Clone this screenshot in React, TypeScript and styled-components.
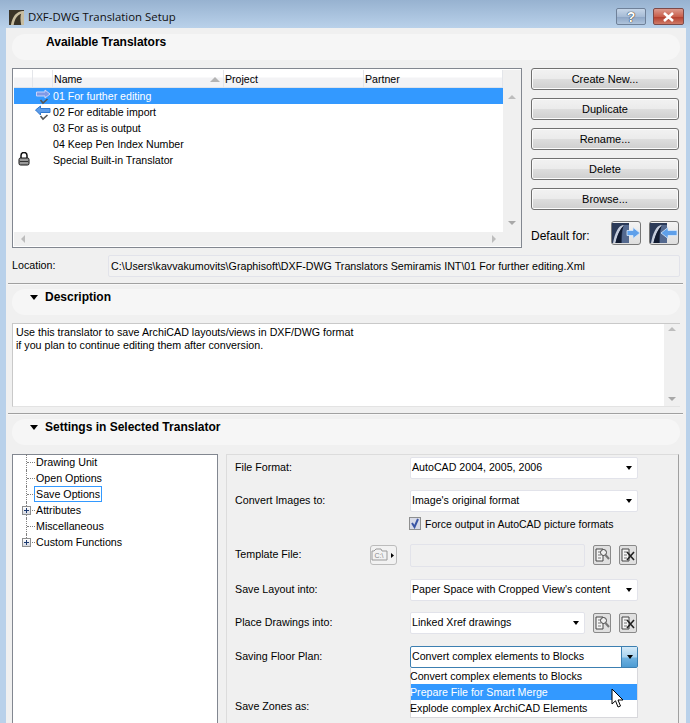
import React from "react";
import styled, { createGlobalStyle } from "styled-components";

const GlobalStyle = createGlobalStyle`
  html, body { margin: 0; padding: 0; background: #b9d1ea; }
  body { font-family: "Liberation Sans", "Noto Sans", sans-serif; font-size: 10.7px; color: #000; }
`;

const Frame = styled.div`
  width: 690px;
  height: 723px;
  overflow: hidden;
  background: linear-gradient(#97b2d0 0, #b9d1ea 28px);
  display: flex;
  flex-direction: column;
`;

const TitleBar = styled.div`
  height: 28px;
  flex: none;
  box-sizing: border-box;
  display: flex;
  align-items: center;
  padding: 6px 6px 0 9px;
  gap: 4px;
  font-family: "Open Sans", sans-serif;
  font-size: 11.4px;
  color: #111;
`;

const TitleText = styled.span`
  flex: 1;
  margin-top: -2px;
`;

const CaptionButton = styled.div<{ $close?: boolean; $w: number }>`
  width: ${(p) => p.$w}px;
  height: 17px;
  box-sizing: border-box;
  margin-left: ${(p) => (p.$close ? 3 : 0)}px;
  margin-top: -1px;
  border: 1px solid ${(p) => (p.$close ? "#7d4a48" : "#6f8199")};
  border-radius: 2px;
  display: flex;
  align-items: center;
  justify-content: center;
  background: ${(p) =>
    p.$close
      ? "linear-gradient(#dc9a8d, #c9604d 50%, #b5402f 55%, #cf7b68)"
      : "linear-gradient(#c6d6e8, #a7bcd6 50%, #8fa7c6 55%, #afc4dc)"};
  color: #fff;
  font-weight: 700;
  font-size: 14px;
  font-family: "Liberation Sans", sans-serif;
  text-shadow: 0 0 1px #222, 0 0 1px #222;
`;

const Content = styled.div`
  margin: 0 4px 0 6px;
  flex: 1;
  background: #f0f0f0;
  display: flex;
  flex-direction: column;
  padding: 6px 0 0 6px;
  min-height: 0;
`;

const SectionHead = styled.div`
  width: 668px;
  height: 26px;
  flex: none;
  box-sizing: border-box;
  border-radius: 13px;
  background: #f6f6f6;
  padding-left: 18px;
  display: flex;
  align-items: flex-start;
  font-weight: 700;
  font-size: 12px;
  line-height: 17px;
`;

const Triangle = styled.span`
  width: 0;
  height: 0;
  margin-top: 6px;
  margin-right: 7px;
  border-left: 4.5px solid transparent;
  border-right: 4.5px solid transparent;
  border-top: 5px solid #000;
`;

const HeadSpacer = styled.span`
  width: 16px;
`;

const TopRow = styled.div`
  display: flex;
  gap: 9px;
  margin-top: 8px;
  height: 180px;
  flex: none;
`;

const ListBox = styled.div`
  width: 510px;
  box-sizing: border-box;
  border: 1px solid #828790;
  background: #fff;
  display: grid;
  grid-template-columns: 489px 1fr;
  padding: 1px 0 1px 1px;
  font-size: 10.6px;
`;

const ListMain = styled.div`
  display: flex;
  flex-direction: column;
`;

const ListHeader = styled.div`
  height: 18px;
  flex: none;
  box-sizing: border-box;
  display: grid;
  grid-template-columns: 19px 20px 171px 140px 1fr;
  background: linear-gradient(#fff 0, #fff 7px, #f3f3f5 8px, #f3f3f5 16px);
  border-bottom: 1px solid #dfe3ea;
`;

const HeadCell = styled.div`
  position: relative;
  padding-left: 1px;
  border-right: 1px solid #e4e6ea;
  line-height: 18px;
  overflow: hidden;
`;

const SortArrow = styled.span`
  position: absolute;
  right: 3px;
  top: 7px;
  width: 0;
  height: 0;
  border-left: 5px solid transparent;
  border-right: 5px solid transparent;
  border-bottom: 5px solid #b4b4b4;
`;

const ListRows = styled.div`
  flex: 1;
`;

const ListRow = styled.div<{ $selected?: boolean }>`
  height: 16px;
  display: grid;
  grid-template-columns: 19px 20px 1fr;
  align-items: center;
  line-height: 16px;
  background: ${(p) => (p.$selected ? "#3399ff" : "transparent")};
  color: ${(p) => (p.$selected ? "#fff" : "#000")};
`;

const IconCell = styled.div`
  display: flex;
  justify-content: center;
  height: 16px;
`;

const VScroll = styled.div`
  background: #f0f0f0;
  display: flex;
  flex-direction: column;
  justify-content: space-between;
  align-items: center;
  padding: 25px 0 21px;
`;

const HScroll = styled.div`
  height: 14px;
  flex: none;
  background: #f0f0f0;
  display: flex;
  justify-content: space-between;
  align-items: center;
  padding: 0 7px;
`;

const Arrow = styled.span<{ $dir: "up" | "down" | "left" | "right" }>`
  width: 0;
  height: 0;
  ${(p) =>
    p.$dir === "up"
      ? "border-left:4px solid transparent;border-right:4px solid transparent;border-bottom:4px solid #bdbdbd;"
      : p.$dir === "down"
        ? "border-left:4px solid transparent;border-right:4px solid transparent;border-top:4px solid #a8a8a8;"
        : p.$dir === "left"
          ? "border-top:4px solid transparent;border-bottom:4px solid transparent;border-right:4px solid #bdbdbd;"
          : "border-top:4px solid transparent;border-bottom:4px solid transparent;border-left:4px solid #bdbdbd;"}
`;

const ButtonColumn = styled.div`
  width: 148px;
  display: flex;
  flex-direction: column;
  gap: 8px;
  font-size: 11px;
`;

const PushButton = styled.div`
  height: 22px;
  box-sizing: border-box;
  border: 1px solid #707070;
  border-radius: 3px;
  background: linear-gradient(#f2f2f2, #ebebeb 48%, #dddddd 52%, #cfcfcf);
  box-shadow: inset 0 0 0 1px #fbfbfb;
  display: flex;
  align-items: center;
  justify-content: center;
  padding-bottom: 1px;
`;

const DefaultRow = styled.div`
  display: flex;
  align-items: center;
  margin-top: 3px;
  height: 24px;
  gap: 8px;
`;

const DefaultLabel = styled.span`
  flex: 1;
  padding-top: 6px;
  font-size: 12px;
`;

const ImageButton = styled.div`
  width: 30px;
  height: 24px;
  box-sizing: border-box;
  border: 1px solid #777;
  border-radius: 3px;
  background: linear-gradient(#f4f4f4, #dedede);
  display: flex;
  align-items: center;
  justify-content: center;
`;

const LocationRow = styled.div`
  display: flex;
  align-items: center;
  margin-top: 7px;
  height: 22px;
  flex: none;
`;

const LocationLabel = styled.span`
  width: 96px;
  margin-top: -3px;
`;

const LocationField = styled.div`
  width: 572px;
  height: 22px;
  box-sizing: border-box;
  border: 1px solid #e2e3ea;
  border-radius: 2px;
  background: #f2f2f2;
  padding-left: 2px;
  font-size: 10.7px;
  line-height: 20px;
  white-space: nowrap;
  overflow: hidden;
`;

const Divider = styled.div<{ $top: number }>`
  height: 1px;
  flex: none;
  width: 675px;
  margin: ${(p) => p.$top}px 0 5px -4px;
  background: #a0a0a0;
  box-shadow: 0 1px 0 #f8f8f8;
`;

const DescBox = styled.div`
  margin-top: 8px;
  width: 668px;
  height: 84px;
  flex: none;
  box-sizing: border-box;
  border: 1px solid #c9c9c9;
  border-bottom-color: #e3e3e3;
  border-right: none;
  background: #fff;
  display: grid;
  grid-template-columns: 1fr 16px;
`;

const DescText = styled.div`
  padding: 2px 3px;
  line-height: 13px;
  white-space: pre-line;
`;

const DescScroll = styled(VScroll)`
  padding: 3px 0 5px;
`;

const SettingsRow = styled.div`
  display: flex;
  gap: 8px;
  margin-top: 9px;
  flex: 1;
  min-height: 0;
`;

const Tree = styled.div`
  width: 206px;
  box-sizing: border-box;
  border: 1px solid #828790;
  border-bottom: none;
  background: #fff;
`;

const TreeRow = styled.div<{ $last?: boolean }>`
  position: relative;
  top: -1px;
  height: 16px;
  line-height: 16px;
  padding-left: 22px;
  &::before {
    content: "";
    position: absolute;
    left: 13px;
    top: 0;
    height: ${(p) => (p.$last ? 8 : 16)}px;
    border-left: 1px dotted #808080;
  }
  &::after {
    content: "";
    position: absolute;
    left: 14px;
    top: 8px;
    width: 8px;
    border-top: 1px dotted #808080;
  }
`;

const TreeLabel = styled.span<{ $focused?: boolean }>`
  display: inline-block;
  line-height: 14px;
  padding: 0 1px;
  margin-left: -1px;
  border: 1px solid ${(p) => (p.$focused ? "#3399ff" : "transparent")};
`;

const Expander = styled.span`
  position: absolute;
  z-index: 1;
  left: 9px;
  top: 4px;
  width: 9px;
  height: 9px;
  box-sizing: border-box;
  border: 1px solid #8e8f8f;
  background: linear-gradient(#fff, #d5d8e0);
  &::before {
    content: "";
    position: absolute;
    left: 1px;
    top: 3px;
    width: 5px;
    height: 1px;
    background: #1c3a70;
  }
  &::after {
    content: "";
    position: absolute;
    left: 3px;
    top: 1px;
    width: 1px;
    height: 5px;
    background: #1c3a70;
  }
`;

const FormPanel = styled.div`
  width: 453px;
  box-sizing: border-box;
  border: 1px solid #dcdcdc;
  border-right: 1px solid #a0a0a0;
  border-bottom: none;
  padding: 2px 0 0 8px;
  display: flex;
  flex-direction: column;
`;

const FormRow = styled.div<{ $top?: number }>`
  display: flex;
  align-items: center;
  height: 22px;
  margin-top: ${(p) => p.$top ?? 0}px;
  flex: none;
`;

const FormLabel = styled.span`
  width: 135px;
  flex: none;
  margin-top: -2px;
`;

const Slot = styled.div`
  width: 40px;
  flex: none;
  display: flex;
`;

const SelectBox = styled.div<{ $w: number; $open?: boolean }>`
  position: relative;
  width: ${(p) => p.$w}px;
  height: 22px;
  box-sizing: border-box;
  background: #fff;
  border: 1px solid ${(p) => (p.$open ? "#3c7fb1" : "#e2e3ea")};
  border-radius: 2px;
  padding-left: 1px;
  display: flex;
  align-items: center;
  justify-content: space-between;
  font-size: 10.65px;
  line-height: 18px;
  white-space: nowrap;
`;

const SelectValue = styled.span`
  margin-top: -2px;
`;

const Caret = styled.span`
  width: 0;
  height: 0;
  margin-right: 5px;
  border-left: 3.5px solid transparent;
  border-right: 3.5px solid transparent;
  border-top: 4px solid #000;
`;

const CaretButton = styled.span`
  width: 16px;
  height: 20px;
  box-sizing: border-box;
  border-left: 1px solid #3c7fb1;
  background: linear-gradient(#d5eaf8, #a9d3ef 50%, #6fb2e0 55%, #4d9bd3);
  display: flex;
  align-items: center;
  justify-content: center;
  & > span { margin: 0; }
`;

const Dropdown = styled.div`
  position: absolute;
  left: -1px;
  top: 21px;
  width: 228px;
  box-sizing: border-box;
  background: #fff;
  border: 1px solid #d8d8dc;
  border-top: none;
  padding-bottom: 1px;
`;

const DropItem = styled.div<{ $active?: boolean }>`
  height: 16px;
  line-height: 16px;
  text-indent: -1px;
  background: ${(p) => (p.$active ? "#3399ff" : "transparent")};
  color: ${(p) => (p.$active ? "#fff" : "#000")};
`;

const Cursor = styled.svg`
  position: absolute;
  left: 200px;
  top: 41px;
`;

const CheckRow = styled.div`
  display: flex;
  align-items: center;
  height: 13px;
  margin-top: 5px;
  margin-left: 174px;
  gap: 4px;
  font-size: 10.5px;
`;

const CheckBox = styled.span`
  width: 12px;
  height: 13px;
  box-sizing: border-box;
  border: 1px solid #8e8f8f;
  background: #d8dbe8;
  display: flex;
`;

const ReadOnlyField = styled.div`
  width: 175px;
  height: 23px;
  flex: none;
  box-sizing: border-box;
  border: 1px solid #e2e3ea;
  border-radius: 2px;
  background: #f0f0f0;
`;

const ToolButton = styled.div<{ $gap: number }>`
  width: 18px;
  height: 20px;
  margin-left: ${(p) => p.$gap}px;
  box-sizing: border-box;
  border: 1px solid #8a8a8a;
  border-radius: 2px;
  background: #e0e0e0;
  display: flex;
  align-items: center;
  justify-content: center;
`;

const FolderButton = styled.div`
  width: 27px;
  height: 20px;
  box-sizing: border-box;
  border: 1px solid #bcbcbc;
  border-radius: 3px;
  background: #f2f2f2;
  display: flex;
  align-items: center;
  justify-content: center;
`;

const ArrowIcon = ({ back }: { back?: boolean }) => (
  <svg width="16" height="16" viewBox="0 0 16 16" style={{ overflow: "visible" }}>
    <path
      d={back ? "M0.5 6 L5.5 2 V4.5 H15 V8.5 H5.5 V11 Z" : "M1.5 4 H10 V2 L15 6 L10 10 V8 H1.5 Z"}
      fill={back ? "#5b9be8" : "#8099e6"}
      stroke={back ? "#2f78d0" : "#c9d4f8"}
      strokeWidth="1"
    />
    <path d="M5.5 12 L8 15 L12.5 11" fill="none" stroke="#555" strokeWidth="1.6" />
  </svg>
);

const LockIcon = () => (
  <svg width="12" height="14" viewBox="0 0 12 14">
    <path d="M3 6 V3.5 a3 3 0 0 1 6 0 V6" fill="none" stroke="#111" strokeWidth="1.5" />
    <rect x="1" y="6" width="10" height="7" rx="1.5" fill="#999" stroke="#111" />
    <rect x="2" y="9" width="8" height="1" fill="#333" />
  </svg>
);

const ArcMark = () => (
  <svg width="15" height="15" viewBox="0 0 16 16" style={{ flex: "none" }}>
    <rect width="16" height="16" fill="#3a3428" />
    <path d="M2 16 C4 6 8 2 14 1 L16 1 L16 16 L13 16 C12 10 12 6 13 4 C8 6 6 10 5 16 Z" fill="#c8bda0" />
  </svg>
);

const DefaultIcon = ({ back }: { back?: boolean }) => (
  <svg width="28" height="20" viewBox="0 0 28 20">
    <rect width="17" height="20" fill="#2b3a58" />
    <path d="M1 20 C3 10 6 3 11 2 L12 2.6 C8 6 5.5 12 3.5 20 Z" fill="#c4ccdc" />
    <path d="M12 2.6 C8 6 5.5 12 3.5 20 H9 C9 12 10 7 12 2.6 Z" fill="#101a30" />
    <path d="M12 2 h5 V20 h-7 C10 12 10 7 12 2 Z" fill="#54698f" />
    <path
      d={back ? "M11 10 L18 4.5 V7.5 H27 V12.5 H18 V15.5 Z" : "M15 7.5 H21 V4.5 L28 10 L21 15.5 V12.5 H15 Z"}
      fill="#5fa0ea"
      stroke="#d8e8fa"
      strokeWidth="0.8"
    />
  </svg>
);

const SearchDocIcon = () => (
  <svg width="16" height="16" viewBox="0 0 16 16">
    <path d="M2 2 H9 V14 H2 Z" fill="#f4f4f4" stroke="#444" />
    <path d="M4 5 H7 M4 8 H7 M4 11 H7" stroke="#777" />
    <circle cx="9.5" cy="5.5" r="3" fill="#eee" stroke="#444" />
    <path d="M11.5 8 L15 12" stroke="#777" strokeWidth="2" />
  </svg>
);

const ClearDocIcon = () => (
  <svg width="16" height="16" viewBox="0 0 16 16">
    <path d="M2 2 H9 V14 H2 Z" fill="#f4f4f4" stroke="#444" />
    <path d="M4 5 H7 M4 8 H7 M4 11 H7" stroke="#777" />
    <path d="M7 5 L14 13 M14 5 L7 13" stroke="#222" strokeWidth="1.6" />
  </svg>
);

const FolderIcon = () => (
  <svg width="25" height="16" viewBox="0 0 25 16">
    <path d="M1 4 H3 L5 2 H10 L11 4 H16 V13 H1 Z" fill="none" stroke="#999" />
    <text x="3.5" y="11" fontSize="7" fill="#888" fontFamily="Liberation Sans, sans-serif">C:\</text>
    <path d="M20 6 L23 8.5 L20 11 Z" fill="#000" />
  </svg>
);

const translators = [
  { name: "01 For further editing", icon: <ArrowIcon />, selected: true },
  { name: "02 For editable import", icon: <ArrowIcon back /> },
  { name: "03 For as is output" },
  { name: "04 Keep Pen Index Number" },
  { name: "Special Built-in Translator", lock: true },
];

const actions = ["Create New...", "Duplicate", "Rename...", "Delete", "Browse..."];

const treeItems = [
  { label: "Drawing Unit" },
  { label: "Open Options" },
  { label: "Save Options", focused: true },
  { label: "Attributes", expand: true },
  { label: "Miscellaneous" },
  { label: "Custom Functions", expand: true, last: true },
];

export default function App() {
  return (
    <Frame>
      <GlobalStyle />
      <TitleBar>
        <ArcMark />
        <TitleText>DXF-DWG Translation Setup</TitleText>
        <CaptionButton $w={30}>?</CaptionButton>
        <CaptionButton $w={31} $close>
          <svg width="13" height="10" viewBox="0 0 13 10">
            <path d="M2 1 L11 9 M11 1 L2 9" stroke="#fff" strokeWidth="2.6" />
          </svg>
        </CaptionButton>
      </TitleBar>
      <Content>
        <SectionHead>
          <HeadSpacer />
          Available Translators
        </SectionHead>
        <TopRow>
          <ListBox>
            <ListMain>
              <ListHeader>
                <HeadCell />
                <HeadCell />
                <HeadCell>
                  Name
                  <SortArrow />
                </HeadCell>
                <HeadCell>Project</HeadCell>
                <HeadCell>Partner</HeadCell>
              </ListHeader>
              <ListRows>
                {translators.map((t) => (
                  <ListRow key={t.name} $selected={t.selected}>
                    <IconCell>{t.lock && <LockIcon />}</IconCell>
                    <IconCell>{t.icon}</IconCell>
                    <span>{t.name}</span>
                  </ListRow>
                ))}
              </ListRows>
              <HScroll>
                <Arrow $dir="left" />
                <Arrow $dir="right" />
              </HScroll>
            </ListMain>
            <VScroll>
              <Arrow $dir="up" />
              <Arrow $dir="down" />
            </VScroll>
          </ListBox>
          <ButtonColumn>
            {actions.map((a) => (
              <PushButton key={a}>{a}</PushButton>
            ))}
            <DefaultRow>
              <DefaultLabel>Default for:</DefaultLabel>
              <ImageButton>
                <DefaultIcon />
              </ImageButton>
              <ImageButton>
                <DefaultIcon back />
              </ImageButton>
            </DefaultRow>
          </ButtonColumn>
        </TopRow>
        <LocationRow>
          <LocationLabel>Location:</LocationLabel>
          <LocationField>C:\Users\kavvakumovits\Graphisoft\DXF-DWG Translators Semiramis INT\01 For further editing.Xml</LocationField>
        </LocationRow>
        <Divider $top={6} />
        <SectionHead>
          <Triangle />
          Description
        </SectionHead>
        <DescBox>
          <DescText>{"Use this translator to save ArchiCAD layouts/views in DXF/DWG format\nif you plan to continue editing them after conversion."}</DescText>
          <DescScroll>
            <Arrow $dir="up" />
            <Arrow $dir="down" />
          </DescScroll>
        </DescBox>
        <Divider $top={6} />
        <SectionHead>
          <Triangle />
          Settings in Selected Translator
        </SectionHead>
        <SettingsRow>
          <Tree>
            {treeItems.map((item) => (
              <TreeRow key={item.label} $last={item.last}>
                {item.expand && <Expander />}
                <TreeLabel $focused={item.focused}>{item.label}</TreeLabel>
              </TreeRow>
            ))}
          </Tree>
          <FormPanel>
            <FormRow>
              <FormLabel>File Format:</FormLabel>
              <Slot />
              <SelectBox $w={228}>
                <SelectValue>AutoCAD 2004, 2005, 2006</SelectValue>
                <Caret />
              </SelectBox>
            </FormRow>
            <FormRow $top={11}>
              <FormLabel>Convert Images to:</FormLabel>
              <Slot />
              <SelectBox $w={228}>
                <SelectValue>Image's original format</SelectValue>
                <Caret />
              </SelectBox>
            </FormRow>
            <CheckRow>
              <CheckBox>
                <svg width="10" height="11" viewBox="0 0 10 11">
                  <path d="M2 5 L4.5 9 L8 1" fill="none" stroke="#3a55a5" strokeWidth="2" />
                </svg>
              </CheckBox>
              Force output in AutoCAD picture formats
            </CheckRow>
            <FormRow $top={14}>
              <FormLabel>Template File:</FormLabel>
              <Slot>
                <FolderButton>
                  <FolderIcon />
                </FolderButton>
              </Slot>
              <ReadOnlyField />
              <ToolButton $gap={8}>
                <SearchDocIcon />
              </ToolButton>
              <ToolButton $gap={8}>
                <ClearDocIcon />
              </ToolButton>
            </FormRow>
            <FormRow $top={13}>
              <FormLabel>Save Layout into:</FormLabel>
              <Slot />
              <SelectBox $w={228}>
                <SelectValue>Paper Space with Cropped View's content</SelectValue>
                <Caret />
              </SelectBox>
            </FormRow>
            <FormRow $top={11}>
              <FormLabel>Place Drawings into:</FormLabel>
              <Slot />
              <SelectBox $w={175}>
                <SelectValue>Linked Xref drawings</SelectValue>
                <Caret />
              </SelectBox>
              <ToolButton $gap={8}>
                <SearchDocIcon />
              </ToolButton>
              <ToolButton $gap={8}>
                <ClearDocIcon />
              </ToolButton>
            </FormRow>
            <FormRow $top={12}>
              <FormLabel>Saving Floor Plan:</FormLabel>
              <Slot />
              <SelectBox $w={228} $open>
                <SelectValue>Convert complex elements to Blocks</SelectValue>
                <CaretButton>
                  <Caret />
                </CaretButton>
                <Dropdown>
                  <DropItem>Convert complex elements to Blocks</DropItem>
                  <DropItem $active>Prepare File for Smart Merge</DropItem>
                  <DropItem>Explode complex ArchiCAD Elements</DropItem>
                </Dropdown>
                <Cursor width="13" height="21" viewBox="0 0 13 21">
                  <path d="M1 1 V16 L4.5 12.8 L7 19 L9.5 18 L7 12 H12 Z" fill="#fff" stroke="#000" />
                </Cursor>
              </SelectBox>
            </FormRow>
            <FormRow $top={28}>
              <FormLabel>Save Zones as:</FormLabel>
            </FormRow>
          </FormPanel>
        </SettingsRow>
      </Content>
    </Frame>
  );
}
